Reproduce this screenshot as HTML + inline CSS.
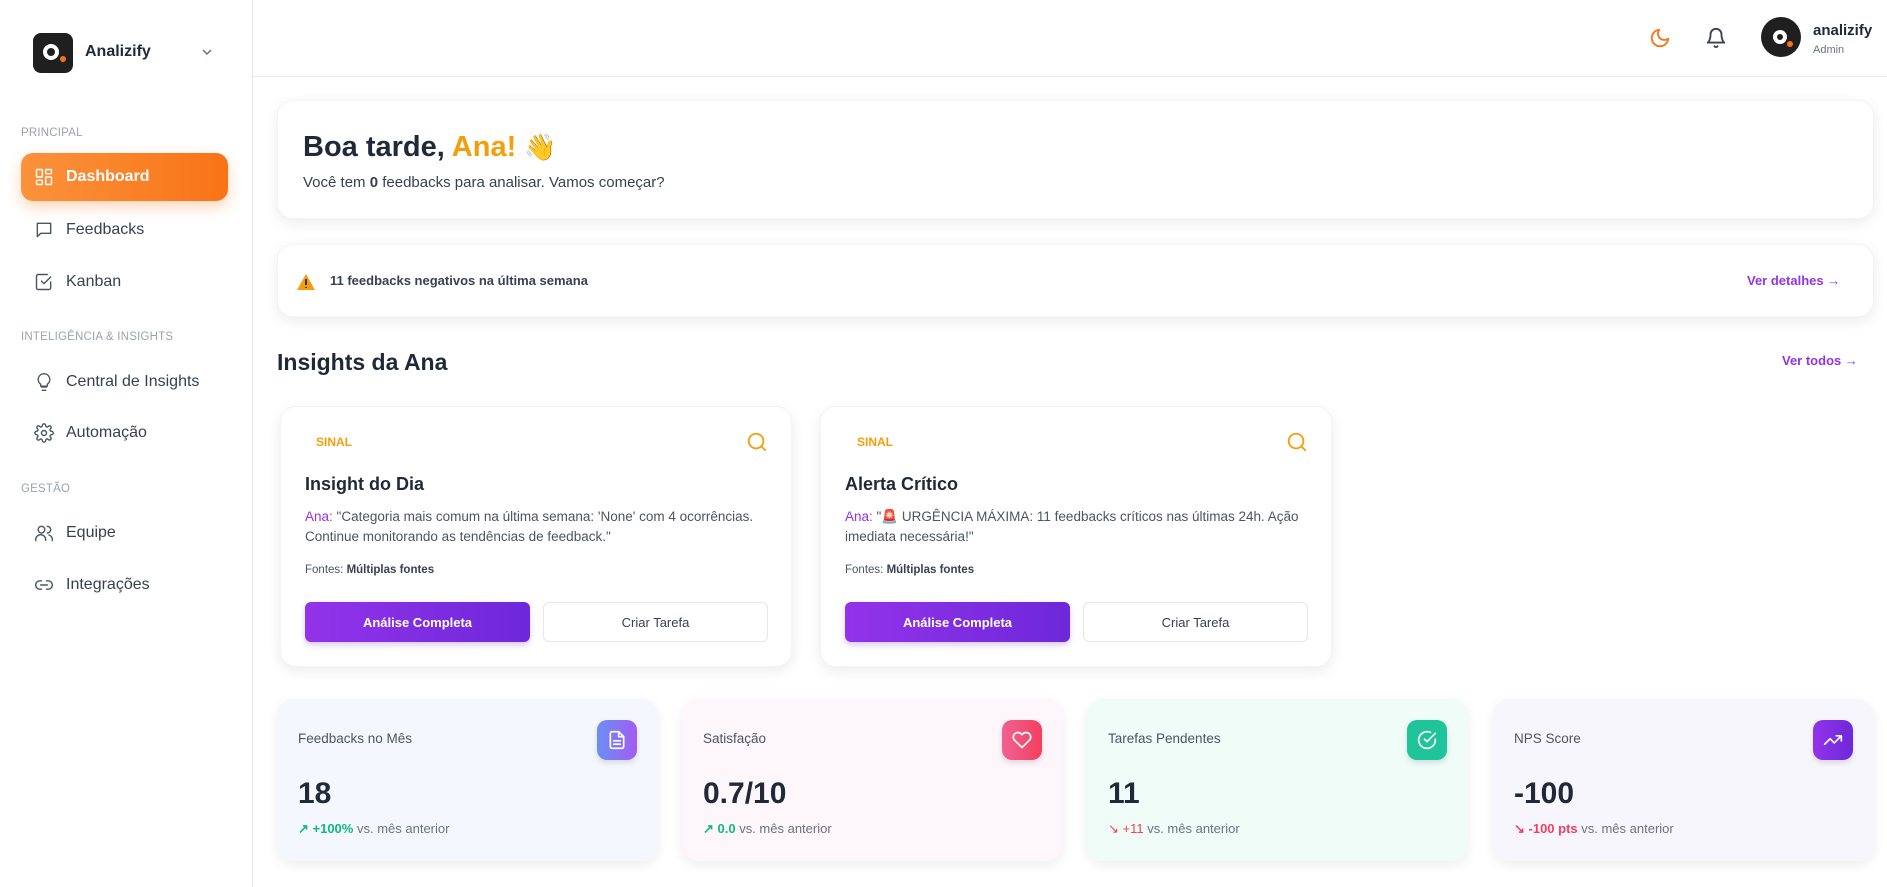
<!DOCTYPE html>
<html><head><meta charset="utf-8"><style>
*{box-sizing:border-box;margin:0;padding:0}
body{width:1887px;height:887px;overflow:hidden;background:#fff;font-family:"Liberation Sans",sans-serif;color:#1f2937;position:relative}
.a{position:absolute}
.side{left:0;top:0;width:253px;height:887px;border-right:1px solid #e5e7eb;background:#fff}
.lbl{font-size:11.5px;color:#9ca3af;left:21px;letter-spacing:.2px}
.nav{left:34px;font-size:16px;color:#374151;display:flex;align-items:center;gap:12px;height:24px}
.nav svg{width:20px;height:20px;fill:none;stroke:#4b5563;stroke-width:1.7;stroke-linecap:round;stroke-linejoin:round}
.card{background:#fff;border-radius:16px;box-shadow:0 4px 14px rgba(0,0,0,.08);border:1px solid #f3f4f6}
.ic{width:20px;height:20px;fill:none;stroke-width:2;stroke-linecap:round;stroke-linejoin:round}
.btn1{background:linear-gradient(90deg,#9333ea,#6d28d9);color:#fff;font-size:13px;font-weight:bold;border-radius:6px;display:flex;align-items:center;justify-content:center;box-shadow:0 3px 6px rgba(109,40,217,.25)}
.btn2{border:1px solid #e5e7eb;color:#374151;font-size:13px;border-radius:6px;display:flex;align-items:center;justify-content:center}
.stat{border-radius:16px;box-shadow:0 4px 12px rgba(0,0,0,.07);width:381px;height:162px;top:699px}
.stat .t{position:absolute;left:21px;top:32px;font-size:13.5px;color:#4b5563}
.stat .v{position:absolute;left:21px;top:78px;font-size:30px;font-weight:bold;color:#1f2937}
.stat .c{position:absolute;left:21px;top:122px;font-size:13px;color:#6b7280}
.stat .b{position:absolute;right:21px;top:21px;width:40px;height:40px;border-radius:10px;display:flex;align-items:center;justify-content:center;box-shadow:0 3px 6px rgba(0,0,0,.12)}
.stat .b svg{width:20px;height:20px;fill:none;stroke:#fff;stroke-width:2;stroke-linecap:round;stroke-linejoin:round}
</style></head><body>
<div class="a side">
  <div class="a" style="left:33px;top:33px;width:40px;height:40px;border-radius:8px;background:#1f1f1f">
    <div class="a" style="left:10px;top:11px;width:16px;height:16px;border-radius:50%;border:4px solid #fff"></div>
    <div class="a" style="left:27px;top:23px;width:6px;height:6px;border-radius:50%;background:#f97316"></div>
  </div>
  <div class="a" style="left:85px;top:43px;font-size:16px;font-weight:bold;color:#1f2937">Analizify</div>
  <svg class="a" style="left:201px;top:47px" width="12" height="10" viewBox="0 0 12 10" fill="none" stroke="#6b7280" stroke-width="1.5"><path d="M2 3l4 4 4-4"/></svg>
  <div class="a lbl" style="top:127px">PRINCIPAL</div>
  <div class="a" style="left:21px;top:153px;width:207px;height:48px;border-radius:12px;background:linear-gradient(90deg,#fb923c,#f97316);box-shadow:0 6px 14px rgba(249,115,22,.3)"></div>
  <div class="a nav" style="top:165px;color:#fff;font-weight:bold"><svg viewBox="0 0 24 24" style="stroke:#fff"><rect x="3" y="3" width="7" height="9" rx="1"/><rect x="14" y="3" width="7" height="5" rx="1"/><rect x="14" y="12" width="7" height="9" rx="1"/><rect x="3" y="16" width="7" height="5" rx="1"/></svg>Dashboard</div>
  <div class="a nav" style="top:218px"><svg viewBox="0 0 24 24"><path d="M4 4h16v12H8l-4 4z"/></svg>Feedbacks</div>
  <div class="a nav" style="top:270px"><svg viewBox="0 0 24 24"><path d="M9 11l3 3 8-8"/><path d="M20 12v7a2 2 0 0 1-2 2H5a2 2 0 0 1-2-2V5a2 2 0 0 1 2-2h11"/></svg>Kanban</div>
  <div class="a lbl" style="top:331px">INTELIGÊNCIA &amp; INSIGHTS</div>
  <div class="a nav" style="top:370px"><svg viewBox="0 0 24 24"><path d="M9 18h6M10 22h4M12 2a7 7 0 0 0-4 12.7V17h8v-2.3A7 7 0 0 0 12 2z"/></svg>Central de Insights</div>
  <div class="a nav" style="top:421px"><svg viewBox="0 0 24 24"><circle cx="12" cy="12" r="3"/><path d="M19.4 15a1.7 1.7 0 0 0 .3 1.8l.1.1a2 2 0 1 1-2.8 2.8l-.1-.1a1.7 1.7 0 0 0-2.9 1.2V21a2 2 0 1 1-4 0v-.1a1.7 1.7 0 0 0-2.9-1.2l-.1.1a2 2 0 1 1-2.8-2.8l.1-.1A1.7 1.7 0 0 0 3 14H3a2 2 0 1 1 0-4h.1a1.7 1.7 0 0 0 1.2-2.9l-.1-.1a2 2 0 1 1 2.8-2.8l.1.1A1.7 1.7 0 0 0 10 3V3a2 2 0 1 1 4 0v.1a1.7 1.7 0 0 0 2.9 1.2l.1-.1a2 2 0 1 1 2.8 2.8l-.1.1A1.7 1.7 0 0 0 21 10h.1a2 2 0 1 1 0 4h-.1a1.7 1.7 0 0 0-1.6 1z"/></svg>Automação</div>
  <div class="a lbl" style="top:483px">GESTÃO</div>
  <div class="a nav" style="top:521px"><svg viewBox="0 0 24 24"><circle cx="9" cy="8" r="4"/><path d="M2 21v-1a6 6 0 0 1 12 0v1M16 4a4 4 0 0 1 0 8M22 21v-1a6 6 0 0 0-4-5.6"/></svg>Equipe</div>
  <div class="a nav" style="top:573px"><svg viewBox="0 0 24 24"><path d="M9 17H7a5 5 0 0 1 0-10h2M15 7h2a5 5 0 0 1 0 10h-2M8 12h8"/></svg>Integrações</div>
</div>
<div class="a" style="left:253px;top:76px;width:1634px;height:1px;background:#e5e7eb"></div>
<svg class="a ic" style="left:1649px;top:27px;width:22px;height:22px" viewBox="0 0 24 24" stroke="#f97316"><path d="M21 12.8A9 9 0 1 1 11.2 3 7 7 0 0 0 21 12.8z"/></svg>
<svg class="a ic" style="left:1705px;top:26px;width:22px;height:24px" viewBox="0 0 24 24" stroke="#374151" stroke-width="1.7"><path d="M18 8a6 6 0 0 0-12 0c0 7-3 9-3 9h18s-3-2-3-9M13.7 21a2 2 0 0 1-3.4 0"/></svg>
<div class="a" style="left:1761px;top:17px;width:40px;height:40px;border-radius:50%;background:#1f1f1f">
  <div class="a" style="left:12px;top:13px;width:14px;height:14px;border-radius:50%;border:4px solid #fff"></div>
  <div class="a" style="left:26px;top:24px;width:6px;height:6px;border-radius:50%;background:#f97316"></div>
</div>
<div class="a" style="left:1813px;top:22px;font-size:15px;font-weight:bold;color:#1f2937">analizify</div>
<div class="a" style="left:1813px;top:44px;font-size:11px;color:#6b7280">Admin</div>

<div class="a card" style="left:277px;top:100px;width:1597px;height:119px"></div>
<div class="a" style="left:303px;top:127px;font-size:29px;font-weight:bold;color:#1f2937">Boa tarde, <span style="color:#f59e0b">Ana!</span> <span style="font-family:'Noto Sans CJK JP',sans-serif;font-size:26px">👋</span></div>
<div class="a" style="left:303px;top:174px;font-size:15px;color:#374151">Você tem <b>0</b> feedbacks para analisar. Vamos começar?</div>

<div class="a card" style="left:277px;top:244px;width:1597px;height:73px"></div>
<svg class="a" style="left:296px;top:273px" width="20" height="18" viewBox="0 0 20 18"><path d="M10 1L19 17H1z" fill="#f59e0b"/><path d="M10 6v6M10 14v1" stroke="#1f2937" stroke-width="1.8"/></svg>
<div class="a" style="left:330px;top:273px;font-size:13px;font-weight:bold;color:#374151">11 feedbacks negativos na última semana</div>
<div class="a" style="left:1747px;top:273px;font-size:13px;font-weight:bold;color:#9333ea">Ver detalhes →</div>

<div class="a" style="left:277px;top:349px;font-size:23px;font-weight:bold;color:#1f2937">Insights da Ana</div>
<div class="a" style="left:1782px;top:353px;font-size:13px;font-weight:bold;color:#9333ea">Ver todos →</div>

<div class="a card" style="left:280px;top:406px;width:512px;height:261px"></div>
<div class="a" style="left:316px;top:435px;font-size:12px;font-weight:bold;color:#f59e0b">SINAL</div>
<svg class="a ic" style="left:746px;top:431px;width:22px;height:22px" viewBox="0 0 24 24" stroke="#f59e0b"><circle cx="11" cy="11" r="8"/><path d="M21 21l-4.3-4.3"/></svg>
<div class="a" style="left:305px;top:474px;font-size:18px;font-weight:bold;color:#1f2937">Insight do Dia</div>
<div class="a" style="left:305px;top:507px;width:470px;font-size:13.5px;line-height:20px;color:#4b5563"><span style="color:#9333ea">Ana:</span> "Categoria mais comum na última semana: 'None' com 4 ocorrências. Continue monitorando as tendências de feedback."</div>
<div class="a" style="left:305px;top:564px;font-size:11.5px;color:#4b5563">Fontes: <b style="color:#374151">Múltiplas fontes</b></div>
<div class="a btn1" style="left:305px;top:602px;width:225px;height:40px">Análise Completa</div>
<div class="a btn2" style="left:543px;top:602px;width:225px;height:40px">Criar Tarefa</div>

<div class="a card" style="left:820px;top:406px;width:512px;height:261px"></div>
<div class="a" style="left:857px;top:435px;font-size:12px;font-weight:bold;color:#f59e0b">SINAL</div>
<svg class="a ic" style="left:1286px;top:431px;width:22px;height:22px" viewBox="0 0 24 24" stroke="#f59e0b"><circle cx="11" cy="11" r="8"/><path d="M21 21l-4.3-4.3"/></svg>
<div class="a" style="left:845px;top:474px;font-size:18px;font-weight:bold;color:#1f2937">Alerta Crítico</div>
<div class="a" style="left:845px;top:507px;width:470px;font-size:13.5px;line-height:20px;color:#4b5563"><span style="color:#9333ea">Ana:</span> "<span style="color:#ef4444">🚨</span> URGÊNCIA MÁXIMA: 11 feedbacks críticos nas últimas 24h. Ação imediata necessária!"</div>
<div class="a" style="left:845px;top:564px;font-size:11.5px;color:#4b5563">Fontes: <b style="color:#374151">Múltiplas fontes</b></div>
<div class="a btn1" style="left:845px;top:602px;width:225px;height:40px">Análise Completa</div>
<div class="a btn2" style="left:1083px;top:602px;width:225px;height:40px">Criar Tarefa</div>

<div class="a stat" style="left:277px;background:#f4f8fe">
  <div class="t">Feedbacks no Mês</div>
  <div class="b" style="background:linear-gradient(90deg,#6b8ff7,#a35cf0)"><svg viewBox="0 0 24 24"><path d="M14 2H6a2 2 0 0 0-2 2v16a2 2 0 0 0 2 2h12a2 2 0 0 0 2-2V8z"/><path d="M14 2v6h6M8 13h8M8 17h8"/></svg></div>
  <div class="v">18</div>
  <div class="c"><span style="color:#10b981;font-weight:bold">↗ +100%</span> vs. mês anterior</div>
</div>
<div class="a stat" style="left:682px;background:#fdf6fa">
  <div class="t">Satisfação</div>
  <div class="b" style="background:linear-gradient(90deg,#f06292,#f43f5e)"><svg viewBox="0 0 24 24"><path d="M20.8 4.6a5.5 5.5 0 0 0-7.8 0L12 5.7l-1-1.1a5.5 5.5 0 0 0-7.8 7.8L12 21l8.8-8.6a5.5 5.5 0 0 0 0-7.8z"/></svg></div>
  <div class="v">0.7/10</div>
  <div class="c"><span style="color:#10b981;font-weight:bold">↗ 0.0</span> vs. mês anterior</div>
</div>
<div class="a stat" style="left:1087px;background:#effcf7">
  <div class="t">Tarefas Pendentes</div>
  <div class="b" style="background:#20c49a"><svg viewBox="0 0 24 24"><path d="M22 11.1V12a10 10 0 1 1-5.9-9.1"/><path d="M22 4L12 14l-3-3"/></svg></div>
  <div class="v">11</div>
  <div class="c"><span style="color:#f43f5e">↘ +11</span> vs. mês anterior</div>
</div>
<div class="a stat" style="left:1493px;background:#f8f6fd">
  <div class="t">NPS Score</div>
  <div class="b" style="background:linear-gradient(90deg,#9333ea,#6d28d9)"><svg viewBox="0 0 24 24"><path d="M22 7l-8.5 8.5-5-5L2 17M16 7h6v6"/></svg></div>
  <div class="v">-100</div>
  <div class="c"><span style="color:#f43f5e;font-weight:bold">↘ -100 pts</span> vs. mês anterior</div>
</div>
</body></html>
